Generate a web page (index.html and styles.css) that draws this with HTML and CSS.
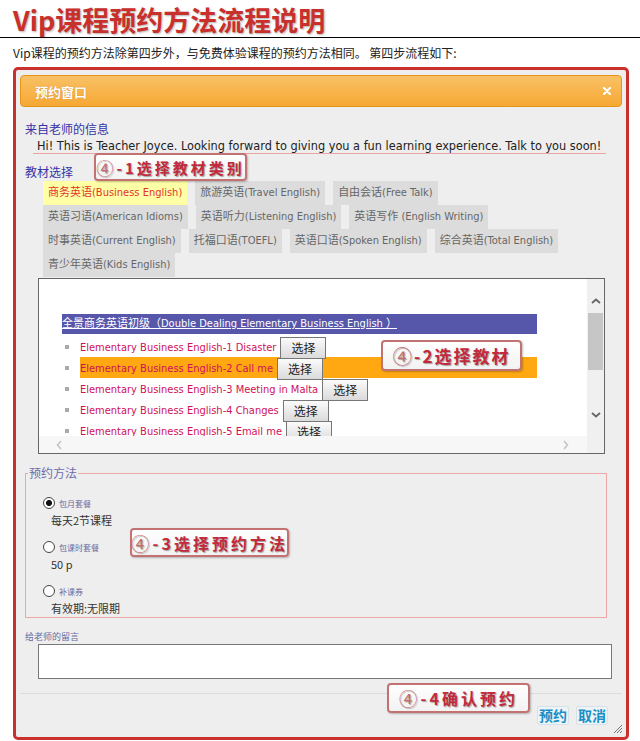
FILE: index.html
```html
<!DOCTYPE html>
<html lang="zh-CN">
<head>
<meta charset="UTF-8">
<meta name="viewport" content="width=device-width, initial-scale=1.0">
<title>Vip课程预约方法流程说明</title>
<link rel="stylesheet" href="styles.css">
</head>
<body>

<h1 class="page_title">Vip课程预约方法流程说明</h1>
<p class="intro">Vip课程的预约方法除第四步外，与免费体验课程的预约方法相同。 第四步流程如下:</p>

<div class="dialog">
  <div class="dlg_head">
    <span class="dlg_title">预约窗口</span>
    <a href="" class="dlg_close">
      <svg width="8" height="8" viewBox="0 0 8 8"><path d="M1 1L7 7M7 1L1 7" stroke="#fff" stroke-width="2.2" stroke-linecap="round"/></svg>
    </a>
  </div>

  <div class="dlg_body">
    <div class="field_label">来自老师的信息</div>
    <div class="teacher_msg">Hi! This is Teacher Joyce. Looking forward to giving you a fun learning experience. Talk to you soon!</div>

    <div class="field_label sub">教材选择</div>
    <ul class="cat_tabs">
      <li class="on">商务英语(Business English)</li>
      <li>旅游英语(Travel English)</li>
      <li>自由会话(Free Talk)</li>
      <li>英语习语(American Idioms)</li>
      <li>英语听力(Listening English)</li>
      <li>英语写作 (English Writing)</li>
      <li>时事英语(Current English)</li>
      <li>托福口语(TOEFL)</li>
      <li>英语口语(Spoken English)</li>
      <li>综合英语(Total English)</li>
      <li>青少年英语(Kids English)</li>
    </ul>

    <div class="course_box">
      <div class="course_view">
        <div class="course_head">全景商务英语初级（Double Dealing Elementary Business English ）</div>
        <ul class="lessons">
          <li><span class="lesson_name">Elementary Business English-1 Disaster</span><button class="pick">选择</button></li>
          <li class="cur"><span class="lesson_name">Elementary Business English-2 Call me</span><button class="pick">选择</button></li>
          <li><span class="lesson_name">Elementary Business English-3 Meeting in Malta</span><button class="pick">选择</button></li>
          <li><span class="lesson_name">Elementary Business English-4 Changes</span><button class="pick">选择</button></li>
          <li><span class="lesson_name">Elementary Business English-5 Email me</span><button class="pick">选择</button></li>
        </ul>
      </div>
      <div class="vbar">
        <svg class="arr_up" width="10" height="6" viewBox="0 0 10 6"><path d="M1 5L5 1.5L9 5" fill="none" stroke="#666" stroke-width="1.8"/></svg>
        <div class="thumb"></div>
        <svg class="arr_down" width="10" height="6" viewBox="0 0 10 6"><path d="M1 1L5 4.5L9 1" fill="none" stroke="#666" stroke-width="1.8"/></svg>
      </div>
      <div class="hbar">
        <svg width="6" height="10" viewBox="0 0 6 10"><path d="M5 1L1.5 5L5 9" fill="none" stroke="#c4c4c4" stroke-width="1.6"/></svg>
        <svg width="6" height="10" viewBox="0 0 6 10"><path d="M1 1L4.5 5L1 9" fill="none" stroke="#c4c4c4" stroke-width="1.6"/></svg>
      </div>
    </div>

    <fieldset class="book_way">
      <legend>预约方法</legend>
      <div class="way">
        <div class="way_head"><span class="radio on"></span><span class="way_name">包月套餐</span></div>
        <div class="way_desc">每天2节课程</div>
      </div>
      <div class="way">
        <div class="way_head"><span class="radio"></span><span class="way_name">包课时套餐</span></div>
        <div class="way_desc">50 p</div>
      </div>
      <div class="way">
        <div class="way_head"><span class="radio"></span><span class="way_name">补课券</span></div>
        <div class="way_desc">有效期:无限期</div>
      </div>
    </fieldset>

    <div class="memo_label">给老师的留言</div>
    <textarea class="memo_box"></textarea>
  </div>

  <div class="dlg_foot">
    <a href="" class="foot_btn">预约</a>
    <a href="" class="foot_btn">取消</a>
  </div>

  <svg class="grip" width="10" height="10" viewBox="0 0 10 10"><path d="M9 1L1 9M9 4L4 9M9 7L7 9" stroke="#777" stroke-width="1"/></svg>

  <!-- 步骤说明 -->
  <div class="note note1"><em>④</em>-1选择教材类别</div>
  <div class="note note2"><em>④</em>-2选择教材</div>
  <div class="note note3"><em>④</em>-3选择预约方法</div>
  <div class="note note4"><em>④</em>-4确认预约</div>
</div>

</body>
</html>
```

FILE: styles.css
```css
* {margin:0; padding:0; box-sizing:content-box;}
body {width:640px; font-family:"Noto Sans CJK SC", sans-serif; font-size:12px; color:#333; background:#fff;}
li {list-style:none;}
a {text-decoration:none;}

.page_title {height:34px; padding:3px 0 0 13px; border-bottom:1px solid #000; font-size:27px; line-height:34px; font-weight:bold; color:#c9302c; text-shadow:1px 1px 2px rgba(0,0,0,.3);}
.intro {margin:7px 0 6px 13px; line-height:16px; color:#222;}

.dialog {position:relative; width:610px; margin-left:13px; border:3px solid #c9302e; border-radius:5px; background:#eee;}

.dlg_head {display:flex; justify-content:space-between; align-items:center; height:30px; margin:5px 4px 0; padding:0 10px 0 14px; border:1px solid #e79519; border-radius:4px; background:linear-gradient(#f9c165, #f6a833); color:#fff;}
.dlg_title {font-size:13px; font-weight:bold; text-shadow:0 0 1px rgba(160,80,0,.6);}
.dlg_close {display:flex;}

.dlg_body {padding:0 9px;}
.field_label {margin-top:14px; line-height:16px; color:#3434a8;}
.field_label.sub {margin-top:10px;}
.teacher_msg {margin:1px 11px 0 8px; padding-left:4px; line-height:15px; border-bottom:1px solid #eaa4a4; font-family:"DejaVu Sans Condensed", "Liberation Sans", sans-serif; font-size:12.6px; color:#222; white-space:nowrap;}

.cat_tabs {display:flex; flex-wrap:wrap; width:540px; margin:1px 0 1px 18px;}
.cat_tabs li {height:24px; line-height:24px; margin-right:8px; padding:0 5px; background:#dcdcdc; color:#666; font-family:"DejaVu Sans Condensed", "Liberation Sans", "Noto Sans CJK SC", sans-serif; font-size:11px; white-space:nowrap;}
.cat_tabs li.on {background:#ffffa6; color:#e2342c;}

.course_box {display:grid; grid-template-columns:548px 17px; grid-template-rows:157px 17px; width:565px; margin-left:13px; border:1px solid #666; background:#fff;}
.course_view {overflow:hidden; padding:35px 0 0 23px;}
.course_head {width:475px; line-height:20px; background:#5656aa; color:#fff; text-decoration:underline; font-family:"DejaVu Sans Condensed", "Liberation Sans", "Noto Sans CJK SC", sans-serif; font-size:11px; white-space:nowrap;}
.lessons {width:457px; margin-top:2px; padding-left:18px;}
.lessons li {list-style:square outside; height:21px; line-height:21px; color:#aaa; font-size:11px; white-space:nowrap;}
.lessons li.cur {background:#ffa812;}
.lesson_name {color:#d0105a; font-family:"DejaVu Sans Condensed", "Liberation Sans", sans-serif;}
.pick {width:44px; height:20px; margin-left:4px; border:1px solid #777; background:linear-gradient(#fbfbfb, #dadada); font-family:"Noto Sans CJK SC", sans-serif; font-size:12px; line-height:18px; color:#222; vertical-align:middle;}

.vbar {grid-column:2; grid-row:1 / span 2; display:flex; flex-direction:column; align-items:center; background:#f0f0f0;}
.arr_up {margin-top:19px;}
.vbar .thumb {width:15px; height:57px; margin-top:9px; background:#c6c6c6;}
.arr_down {margin-top:42px;}
.hbar {grid-column:1; grid-row:2; display:flex; justify-content:space-between; align-items:center; padding:0 18px 0 17px; background:#f7f7f7;}

.book_way {margin:11px 10px 0 0; padding:15px 0 1px 2px; border:1px solid #f0a6a6;}
.book_way legend {padding:0 1px; line-height:16px; color:#6c6cac;}
.way + .way {margin-top:12px;}
.way_head {display:flex; align-items:center; height:14px; padding-left:15px;}
.radio {width:10px; height:10px; border:1px solid #444; border-radius:50%; background:#fff;}
.radio.on {background:radial-gradient(circle, #111 0 2.6px, #fff 3.4px);}
.way_name {margin-left:4px; font-size:8px; color:#6a6aa0;}
.way_desc {margin-top:2px; padding-left:23px; line-height:16px; font-size:11px; color:#333;}

.memo_label {margin-top:13px; line-height:12px; font-size:9px; color:#6a6aa0;}
.memo_box {display:block; width:572px; height:33px; margin:1px 0 0 13px; border:1px solid #777; background:#fff; resize:none; outline:none;}

.dlg_foot {display:flex; justify-content:flex-end; gap:7px; height:31px; margin:14px 4px 0; padding:12px 14px 0 0; border-top:1px solid #dcdcdc;}
.foot_btn {height:17px; line-height:17px; padding:0 1px; border:1px solid #d6e2ea; border-radius:2px; background:#eef3f6; font-size:14px; font-weight:bold; color:#1a8fc6;}

.grip {position:absolute; right:3px; bottom:3px;}

.note {position:absolute; display:flex; align-items:center; justify-content:center; border:2px solid #c37272; border-radius:4px; background:linear-gradient(#fff, #f2f2f2); box-shadow:1px 1px 2px rgba(0,0,0,.25); color:#c22a3c; font-weight:bold; text-shadow:1px 1px 1px rgba(0,0,0,.35); white-space:nowrap;}
.note em {font-style:normal; font-weight:normal; font-size:1.15em; color:#c86a6a;}
.note1 {left:78px; top:83px; width:149px; height:24px; font-size:15px; letter-spacing:3px;}
.note2 {left:365px; top:270px; width:137px; height:27px; font-size:17px; letter-spacing:2px;}
.note3 {left:114px; top:458px; width:155px; height:25px; font-size:16px; letter-spacing:3px;}
.note4 {left:371px; top:613px; width:139px; height:26px; font-size:16px; letter-spacing:3px;}
```
